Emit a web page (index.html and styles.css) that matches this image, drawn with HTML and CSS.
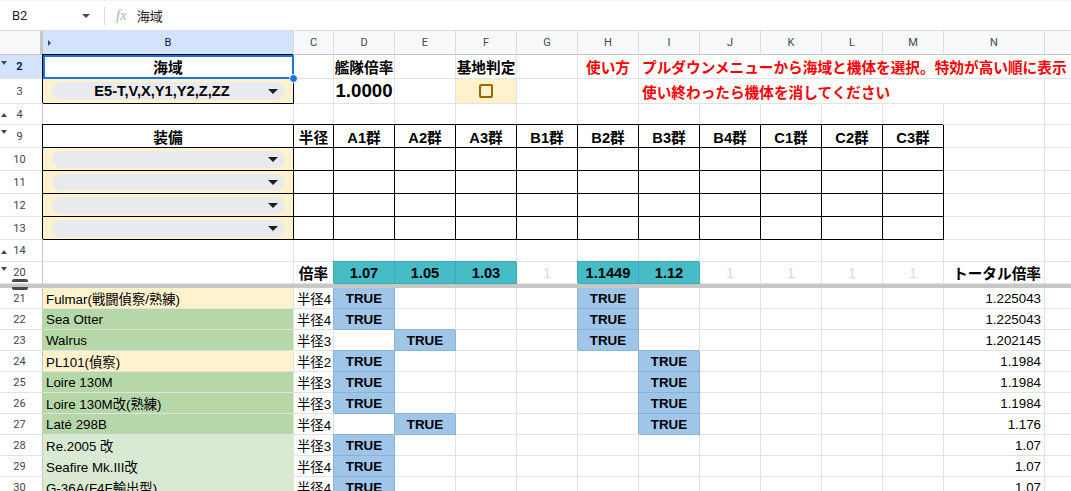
FILE: index.html
```html
<!DOCTYPE html>
<html lang="ja">
<head>
<meta charset="utf-8">
<title>Sheet</title>
<link rel="stylesheet" href="styles.css">
</head>
<body>
<div class="fbar">
  <div class="namebox"><span>B2</span><i class="caret"></i></div>
  <div class="sep"></div>
  <span class="fx">fx</span>
  <span class="fval">海域</span>
</div>
<div class="sheet">
  <!-- header -->
  <div class="ch corner"></div>
  <div class="ch csel"><i class="hid"></i>B</div>
  <div class="ch">C</div>
  <div class="ch">D</div>
  <div class="ch">E</div>
  <div class="ch">F</div>
  <div class="ch">G</div>
  <div class="ch">H</div>
  <div class="ch">I</div>
  <div class="ch">J</div>
  <div class="ch">K</div>
  <div class="ch">L</div>
  <div class="ch">M</div>
  <div class="ch">N</div>
  <div class="ch"></div>

  <!-- row 2 -->
  <div class="rh rsel"><i class="dn"></i><span>2</span></div>
  <div class="c k ctr b lg selcell">海域<div class="selbox"><i class="handle"></i></div></div>
  <div class="c"></div>
  <div class="c ctr b lg">艦隊倍率</div>
  <div class="c"></div>
  <div class="c ctr b lg">基地判定</div>
  <div class="c"></div>
  <div class="c ctr b lg red">使い方</div>
  <div class="c b lg red nb">プルダウンメニューから海域と機体を選択。特効が高い順に表示</div>
  <div class="c nb"></div>
  <div class="c nb"></div>
  <div class="c nb"></div>
  <div class="c nb"></div>
  <div class="c nb"></div>
  <div class="c"></div>

  <!-- row 3 -->
  <div class="rh"><i></i><span>3</span></div>
  <div class="c k y chipcell"><div class="chip chip3"><span class="chiptxt">E5-T,V,X,Y1,Y2,Z,ZZ</span><i class="darr"></i></div></div>
  <div class="c"></div>
  <div class="c ctr b xl">1.0000</div>
  <div class="c"></div>
  <div class="c ctr y"><i class="cbox"></i></div>
  <div class="c"></div>
  <div class="c"></div>
  <div class="c b lg red nb">使い終わったら機体を消してください</div>
  <div class="c nb"></div>
  <div class="c nb"></div>
  <div class="c nb"></div>
  <div class="c nb"></div>
  <div class="c"></div>
  <div class="c"></div>

  <!-- row 4 -->
  <div class="rh"><i class="up"></i><span>4</span></div>
  <div class="c"></div><div class="c"></div><div class="c"></div><div class="c"></div><div class="c"></div>
  <div class="c"></div><div class="c"></div><div class="c"></div><div class="c"></div><div class="c"></div>
  <div class="c"></div><div class="c"></div><div class="c"></div><div class="c"></div>

  <!-- row 9 -->
  <div class="rh"><i class="dn"></i><span>9</span></div>
  <div class="c k ctr b lg">装備</div>
  <div class="c k ctr b lg">半径</div>
  <div class="c k ctr b lg">A1群</div>
  <div class="c k ctr b lg">A2群</div>
  <div class="c k ctr b lg">A3群</div>
  <div class="c k ctr b lg">B1群</div>
  <div class="c k ctr b lg">B2群</div>
  <div class="c k ctr b lg">B3群</div>
  <div class="c k ctr b lg">B4群</div>
  <div class="c k ctr b lg">C1群</div>
  <div class="c k ctr b lg">C2群</div>
  <div class="c k ctr b lg">C3群</div>
  <div class="c"></div>
  <div class="c"></div>

  <!-- rows 10-13 -->
  <div class="rh"><i></i><span>10</span></div>
  <div class="c k y chipcell"><div class="chip"><span class="chiptxt"></span><i class="darr"></i></div></div>
  <div class="c k"></div><div class="c k"></div><div class="c k"></div><div class="c k"></div><div class="c k"></div><div class="c k"></div>
  <div class="c k"></div><div class="c k"></div><div class="c k"></div><div class="c k"></div><div class="c k"></div>
  <div class="c"></div><div class="c"></div>

  <div class="rh"><i></i><span>11</span></div>
  <div class="c k y chipcell"><div class="chip"><span class="chiptxt"></span><i class="darr"></i></div></div>
  <div class="c k"></div><div class="c k"></div><div class="c k"></div><div class="c k"></div><div class="c k"></div><div class="c k"></div>
  <div class="c k"></div><div class="c k"></div><div class="c k"></div><div class="c k"></div><div class="c k"></div>
  <div class="c"></div><div class="c"></div>

  <div class="rh"><i></i><span>12</span></div>
  <div class="c k y chipcell"><div class="chip"><span class="chiptxt"></span><i class="darr"></i></div></div>
  <div class="c k"></div><div class="c k"></div><div class="c k"></div><div class="c k"></div><div class="c k"></div><div class="c k"></div>
  <div class="c k"></div><div class="c k"></div><div class="c k"></div><div class="c k"></div><div class="c k"></div>
  <div class="c"></div><div class="c"></div>

  <div class="rh"><i></i><span>13</span></div>
  <div class="c k y chipcell"><div class="chip"><span class="chiptxt"></span><i class="darr"></i></div></div>
  <div class="c k"></div><div class="c k"></div><div class="c k"></div><div class="c k"></div><div class="c k"></div><div class="c k"></div>
  <div class="c k"></div><div class="c k"></div><div class="c k"></div><div class="c k"></div><div class="c k"></div>
  <div class="c"></div><div class="c"></div>

  <!-- row 14 -->
  <div class="rh"><i class="up"></i><span>14</span></div>
  <div class="c"></div><div class="c"></div><div class="c"></div><div class="c"></div><div class="c"></div>
  <div class="c"></div><div class="c"></div><div class="c"></div><div class="c"></div><div class="c"></div>
  <div class="c"></div><div class="c"></div><div class="c"></div><div class="c"></div>

  <!-- row 20 -->
  <div class="rh"><i class="dn"></i><span>20</span></div>
  <div class="c"></div>
  <div class="c ctr b lg">倍率</div>
  <div class="c ctr b lg tl">1.07</div>
  <div class="c ctr b lg tl">1.05</div>
  <div class="c ctr b lg tl">1.03</div>
  <div class="c ctr lg one">1</div>
  <div class="c ctr b lg tl">1.1449</div>
  <div class="c ctr b lg tl">1.12</div>
  <div class="c ctr lg one">1</div>
  <div class="c ctr lg one">1</div>
  <div class="c ctr lg one">1</div>
  <div class="c ctr lg one">1</div>
  <div class="c r b lg">トータル倍率</div>
  <div class="c"></div>

  <!-- freeze line -->
  <div class="freeze"><i class="fhandle"></i></div>

  <!-- row 21 -->
  <div class="rh"><i></i><span>21</span></div>
  <div class="c y">Fulmar(戦闘偵察/熟練)</div>
  <div class="c">半径4</div>
  <div class="c t">TRUE</div><div class="c"></div><div class="c"></div><div class="c"></div>
  <div class="c t">TRUE</div><div class="c"></div><div class="c"></div><div class="c"></div><div class="c"></div><div class="c"></div>
  <div class="c r">1.225043</div><div class="c"></div>

  <!-- row 22 -->
  <div class="rh"><i></i><span>22</span></div>
  <div class="c g1">Sea Otter</div>
  <div class="c">半径4</div>
  <div class="c t">TRUE</div><div class="c"></div><div class="c"></div><div class="c"></div>
  <div class="c t">TRUE</div><div class="c"></div><div class="c"></div><div class="c"></div><div class="c"></div><div class="c"></div>
  <div class="c r">1.225043</div><div class="c"></div>

  <!-- row 23 -->
  <div class="rh"><i></i><span>23</span></div>
  <div class="c g1">Walrus</div>
  <div class="c">半径3</div>
  <div class="c"></div><div class="c t">TRUE</div><div class="c"></div><div class="c"></div>
  <div class="c t">TRUE</div><div class="c"></div><div class="c"></div><div class="c"></div><div class="c"></div><div class="c"></div>
  <div class="c r">1.202145</div><div class="c"></div>

  <!-- row 24 -->
  <div class="rh"><i></i><span>24</span></div>
  <div class="c y">PL101(偵察)</div>
  <div class="c">半径2</div>
  <div class="c t">TRUE</div><div class="c"></div><div class="c"></div><div class="c"></div>
  <div class="c"></div><div class="c t">TRUE</div><div class="c"></div><div class="c"></div><div class="c"></div><div class="c"></div>
  <div class="c r">1.1984</div><div class="c"></div>

  <!-- row 25 -->
  <div class="rh"><i></i><span>25</span></div>
  <div class="c g1">Loire 130M</div>
  <div class="c">半径3</div>
  <div class="c t">TRUE</div><div class="c"></div><div class="c"></div><div class="c"></div>
  <div class="c"></div><div class="c t">TRUE</div><div class="c"></div><div class="c"></div><div class="c"></div><div class="c"></div>
  <div class="c r">1.1984</div><div class="c"></div>

  <!-- row 26 -->
  <div class="rh"><i></i><span>26</span></div>
  <div class="c g1">Loire 130M改(熟練)</div>
  <div class="c">半径3</div>
  <div class="c t">TRUE</div><div class="c"></div><div class="c"></div><div class="c"></div>
  <div class="c"></div><div class="c t">TRUE</div><div class="c"></div><div class="c"></div><div class="c"></div><div class="c"></div>
  <div class="c r">1.1984</div><div class="c"></div>

  <!-- row 27 -->
  <div class="rh"><i></i><span>27</span></div>
  <div class="c g1">Laté 298B</div>
  <div class="c">半径4</div>
  <div class="c"></div><div class="c t">TRUE</div><div class="c"></div><div class="c"></div>
  <div class="c"></div><div class="c t">TRUE</div><div class="c"></div><div class="c"></div><div class="c"></div><div class="c"></div>
  <div class="c r">1.176</div><div class="c"></div>

  <!-- row 28 -->
  <div class="rh"><i></i><span>28</span></div>
  <div class="c g2">Re.2005 改</div>
  <div class="c">半径3</div>
  <div class="c t">TRUE</div><div class="c"></div><div class="c"></div><div class="c"></div>
  <div class="c"></div><div class="c"></div><div class="c"></div><div class="c"></div><div class="c"></div><div class="c"></div>
  <div class="c r">1.07</div><div class="c"></div>

  <!-- row 29 -->
  <div class="rh"><i></i><span>29</span></div>
  <div class="c g2">Seafire Mk.III改</div>
  <div class="c">半径4</div>
  <div class="c t">TRUE</div><div class="c"></div><div class="c"></div><div class="c"></div>
  <div class="c"></div><div class="c"></div><div class="c"></div><div class="c"></div><div class="c"></div><div class="c"></div>
  <div class="c r">1.07</div><div class="c"></div>

  <!-- row 30 -->
  <div class="rh"><i></i><span>30</span></div>
  <div class="c g2">G-36A(F4F輸出型)</div>
  <div class="c">半径4</div>
  <div class="c t">TRUE</div><div class="c"></div><div class="c"></div><div class="c"></div>
  <div class="c"></div><div class="c"></div><div class="c"></div><div class="c"></div><div class="c"></div><div class="c"></div>
  <div class="c r">1.07</div><div class="c"></div>
</div>
</body>
</html>
```

FILE: styles.css
```css
* { box-sizing: border-box; }
html, body { margin: 0; padding: 0; background: #fff; overflow: hidden; }
body {
  width: 1071px;
  height: 491px;
  font-family: "Liberation Sans", "Noto Sans CJK JP", sans-serif;
  color: #000;
}

/* formula bar */
.fbar {
  height: 31px;
  border-top: 1px solid #f1f3f4;
  border-bottom: 1px solid #dadce0;
  display: flex;
  align-items: center;
  font-family: Roboto, "Noto Sans CJK JP", sans-serif;
  font-size: 13px;
  color: #1f1f1f;
}
.namebox {
  width: 104px;
  display: flex;
  align-items: center;
  justify-content: space-between;
  padding: 0 14px 0 12px;
}
.caret {
  width: 0; height: 0;
  border-left: 4px solid transparent;
  border-right: 4px solid transparent;
  border-top: 4px solid #444746;
}
.sep { width: 1px; height: 18px; background: #dadce0; }
.fx {
  font-family: "Liberation Serif", serif;
  font-style: italic;
  color: #b4b4b4;
  font-size: 15px;
  margin: 0 10px 0 11px;
}
.fval { font-family: "Noto Sans CJK JP", sans-serif; font-size: 13px; }

/* grid */
.sheet {
  display: grid;
  grid-template-columns: 43px 251px 40px repeat(10, 61px) 101px 40px;
  grid-template-rows: 24px 24px 25px 21px 23px 23px 23px 23px 23px 22px 22px 4px repeat(10, 21px);
}

.ch {
  background: #f8f9fa;
  border-right: 1px solid #dadce0;
  border-bottom: 1px solid #c4c7c5;
  display: flex;
  align-items: center;
  justify-content: center;
  font-family: Roboto, sans-serif;
  font-size: 11px;
  color: #444746;
  position: relative;
}
.ch.corner { border-right: 3px solid #c4c7c5; }
.ch.csel { background: #d3e3fd; color: #041e49; }
.hid {
  position: absolute; left: 5px; top: 9px;
  width: 0; height: 0;
  border-top: 3px solid transparent;
  border-bottom: 3px solid transparent;
  border-left: 3px solid #444746;
}

.rh {
  display: grid;
  grid-template-columns: 4px 1fr 10px;
  align-items: center;
  padding-left: 3px;
  border-right: 1px solid #c4c7c5;
  border-bottom: 1px solid #e2e2e2;
  font-family: Roboto, sans-serif;
  font-size: 11px;
  color: #444746;
  background: #fff;
}
.rh span { text-align: center; }
.rh.rsel { background: #d3e3fd; color: #041e49; font-weight: 700; }
.rh .dn, .rh .up { width: 0; height: 0; border-left: 3px solid transparent; border-right: 3px solid transparent; margin-left: -2px; }
.rh .dn { border-top: 4px solid #444746; margin-top: -8px; }
.rh .up { border-bottom: 4px solid #444746; margin-top: 2px; }

.c {
  border-right: 1px solid #e2e2e2;
  border-bottom: 1px solid #e2e2e2;
  display: flex;
  align-items: center;
  padding: 0 3px;
  white-space: nowrap;
  font-size: 13.33px;
  min-width: 0;
}
.c.nb { border-right-color: transparent; }
.ctr { justify-content: center; }
.r { justify-content: flex-end; }
.b { font-weight: 700; }
.lg { font-size: 14.67px; }
.xl { font-size: 18.67px; }
.red { color: #ff0000; }
.y { background: #fff2cc; }
.g1 { background: #b6d7a8; }
.g2 { background: #d9ead3; }

.k {
  border-right-color: #000;
  border-bottom-color: #000;
  box-shadow: -1px -1px 0 0 #000;
}
.tl {
  background: #46bdc6;
  border-right-color: #3daab3;
  border-bottom-color: #3daab3;
  box-shadow: -1px -1px 0 0 #3daab3;
}
.one { color: #d9d9d9; }
.t {
  background: #9fc5e8;
  border-right-color: #8ab3da;
  border-bottom-color: #8ab3da;
  box-shadow: -1px -1px 0 0 #8ab3da;
  justify-content: center;
  font-weight: 700;
}

/* selection */
.selcell { position: relative; }
.selbox {
  position: absolute;
  top: 0; left: 0; right: -1px; bottom: -1px;
  border: 2px solid #1a73e8;
  z-index: 3;
}
.handle {
  position: absolute;
  right: -6px; bottom: -6px;
  width: 9px; height: 9px;
  border-radius: 50%;
  background: #1a73e8;
  border: 1px solid #fff;
}

/* chips */
.chipcell { padding: 0; align-items: flex-start; }
.chip {
  margin: 3px 8px 0 9px;
  height: 17px;
  flex: 1;
  border-radius: 9px;
  background: #e8eaed;
  display: flex;
  align-items: center;
  position: relative;
}
.chip3 { height: 18px; }
.chiptxt {
  flex: 1;
  text-align: center;
  font-weight: 700;
  font-size: 14.67px;
  padding-left: 4px;
}
.darr {
  width: 0; height: 0;
  border-left: 5px solid transparent;
  border-right: 5px solid transparent;
  border-top: 5px solid #1f1f1f;
  margin-right: 7px;
}

.cbox {
  width: 14px; height: 14px;
  border: 2px solid #9c6500;
  border-radius: 2px;
}

/* freeze line */
.freeze {
  grid-column: 1 / -1;
  background: #c7c7c7;
  position: relative;
}
.fhandle {
  position: absolute;
  left: 12px; top: -5px;
  width: 16px; height: 11px;
  border-top: 3px solid #4a4a4a;
  border-bottom: 3px solid #4a4a4a;
  border-radius: 2px;
}
```
